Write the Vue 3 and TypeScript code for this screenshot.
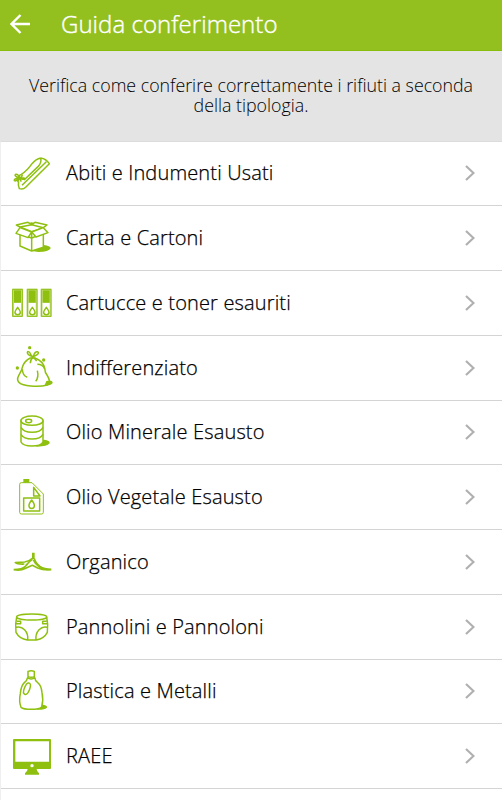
<script setup lang="ts">
interface Category {
  id: string
  label: string
  viewBox: string
}

const categories: Category[] = [
  { id: 'clothes', label: 'Abiti e Indumenti Usati', viewBox: '0 -12 192 192' },
  { id: 'paper', label: 'Carta e Cartoni', viewBox: '0 -12 192 192' },
  { id: 'toner', label: 'Cartucce e toner esauriti', viewBox: '0 -12 192 192' },
  { id: 'unsorted', label: 'Indifferenziato', viewBox: '0 -8 192 192' },
  { id: 'mineral', label: 'Olio Minerale Esausto', viewBox: '0 -8 192 192' },
  { id: 'vegetable', label: 'Olio Vegetale Esausto', viewBox: '0 -9 192 192' },
  { id: 'organic', label: 'Organico', viewBox: '0 -11 192 192' },
  { id: 'diapers', label: 'Pannolini e Pannoloni', viewBox: '0 -11 192 192' },
  { id: 'plastic', label: 'Plastica e Metalli', viewBox: '0 -8 192 192' },
  { id: 'raee', label: 'RAEE', viewBox: '0 -9 192 192' },
]
</script>

<template>
  <main class="screen">
    <header class="bar">
      <svg class="back" viewBox="0 0 20 20"><path d="M20 10H1.5M10.5 1 1.5 10l9 9" /></svg>
      <h1 class="title">Guida conferimento</h1>
    </header>
    <p class="intro">Verifica come conferire correttamente i rifiuti a seconda<br />della tipologia.</p>
    <ul class="list">
      <li v-for="c in categories" :key="c.id" class="row">
        <svg class="icon" :viewBox="c.viewBox">
          <g v-if="c.id === 'clothes'">
            <path d="M122 39Q138 41 148 56L77 127Q69 135 58 131Q53 121 56 109M122 39Q108 42 96 56Q82 77 64 88M122 39Q126 52 114 65L72 105M139 50 66 121" />
            <path d="M57 99Q41 92 47 88Q56 87 57 99Q58 86 66 90Q69 94 57 99Q76 97 74 102Q68 105 57 99Q41 101 43 107Q49 110 57 99L53 112M58 100 64 110" />
          </g>
          <g v-else-if="c.id === 'paper'">
            <path class="solid" d="M96 123 131 105Q151 107 152 115Q147 126 115 126Z" />
            <path class="paper" d="M60 73 95 84 130 70V112L95 123 60 108Z" />
            <path d="M60 51 95 39 130 53 95 65ZM60 51V71M130 53V70M95 65V123" />
            <path class="paper" d="M60 51 49 45 84 37 95 44ZM130 53 141 45 105 37 95 44ZM60 53 95 66 84 83 48 70ZM130 53 95 66 108 81 144 68Z" />
          </g>
          <g v-else-if="c.id === 'toner'">
            <g v-for="x in [36, 80, 122]" :key="x" :transform="`translate(${x} 41)`">
              <path class="pale" d="M0 0H33V85H0Z" />
              <path class="solid" d="M6 5H27V42H6Z" />
              <path class="paper blank" d="M6 43H27V80H6Z" />
              <path class="thin" d="M2 2H31V83H2Z" />
              <path d="M17 56Q8 68 9 72C10 80 24 80 25 72Q26 68 17 56Z" />
            </g>
          </g>
          <g v-else-if="c.id === 'unsorted'">
            <path d="M91 58Q73 67 68 83Q66 94 56 111C47 128 57 139 92 142Q121 145 142 139C154 134 147 119 141 109Q135 102 134 89Q130 68 105 58Z" />
            <path d="M96 56C88 32 79 38 83 45Q86 51 100 54C121 46 117 37 108 40Q102 43 99 57M99 56Q91 62 91 74M102 57 110 67M112 77Q128 77 134 91M112 96Q117 116 107 128M67 92Q68 112 82 116" />
            <path class="solid" d="M139 127Q157 123 158 133Q153 142 134 140Z" />
            <circle class="solid" cx="89" cy="27" r="5" />
            <circle class="solid" cx="131" cy="64" r="5" />
            <circle class="solid" cx="52" cy="88" r="5" />
          </g>
          <g v-else-if="c.id === 'mineral'">
            <path class="solid" d="M99 128 132 111Q151 113 149 122Q141 132 112 132Z" />
            <path class="paper" d="M63 53V118Q69 130 96 130Q123 130 129 118V53Z" />
            <ellipse class="paper" cx="96" cy="54" rx="33" ry="14" />
            <ellipse cx="86" cy="55" rx="9" ry="5" />
            <path d="M63 74Q71 89 96 89Q122 89 129 74M63 95Q71 109 96 109Q122 109 129 95" />
          </g>
          <g v-else-if="c.id === 'vegetable'">
            <path class="solid" d="M70 33H88V44H70Z" />
            <path class="thin" d="M64 44H96L130 78V133Q130 138 125 138H64Q59 138 59 133V49Q59 44 64 44Z" />
            <path d="M101 58V84H120Z" />
            <path d="M71 90H119V129H71Z" />
            <path d="M95 96Q86 108 87 114C88 124 102 124 103 114Q104 108 95 96Z" />
          </g>
          <g v-else-if="c.id === 'organic'">
            <path class="solid" d="M96 57H104V76L96 78Z" />
            <path class="leaf" d="M98 73Q88 83 74 85L46 87Q53 92 73 91M96 78Q81 90 77 97Q67 107 41 108M41 108Q61 112 77 104L97 95L113 103Q130 110 154 108M103 74Q106 88 120 98Q132 106 154 107M100 79Q106 92 116 98Q126 105 139 107M86 86Q77 101 60 107" />
          </g>
          <g v-else-if="c.id === 'diapers'">
            <ellipse cx="95" cy="55" rx="45" ry="9" />
            <path d="M50 55Q45 77 48 101Q58 120 82 124H109Q133 119 142 101Q145 77 140 55M48 86C67 80 86 99 83 124M142 86C124 80 105 99 108 124M51 68H62V75H49M139 68H128V75H141" />
          </g>
          <g v-else-if="c.id === 'plastic'">
            <path class="solid" d="M109 141 126 129Q143 130 141 138Q132 145 112 144Z" />
            <path class="paper" d="M82 50Q81 57 73 63Q63 72 61 96Q56 119 63 137Q70 143 94 143Q118 143 125 136Q131 115 126 93Q124 71 113 63Q105 58 105 50Z" />
            <path class="paper" d="M84 29Q94 25 103 29V45Q94 49 84 45ZM81 48Q93 56 106 48" />
            <ellipse cx="81" cy="81" rx="8" ry="18" transform="rotate(22 81 81)" />
          </g>
          <g v-else>
            <path class="solid" fill-rule="evenodd" d="M42 36H150Q153 36 153 39V123Q153 126 150 126H110Q110 133 117 139V143H75V139Q82 134 83 126H42Q39 126 39 123V39Q39 36 42 36ZM46 43V104H147V43ZM101 116A5 5 0 1 0 91 116A5 5 0 1 0 101 116Z" />
          </g>
        </svg>
        <span class="label">{{ c.label }}</span>
        <svg class="chevron" viewBox="0 0 10 16"><path d="M1 1 8.5 8 1 15" /></svg>
      </li>
    </ul>
  </main>
</template>

<style>
body {
  margin: 0;
  background: #fff;
}
</style>

<style scoped>
.screen {
  box-sizing: border-box;
  height: 800px;
  overflow: hidden;
  background: #fff;
  color: #000;
  font-family: 'Open Sans', 'Noto Sans', sans-serif;
}
.bar {
  box-sizing: border-box;
  display: flex;
  align-items: center;
  height: 51px;
  padding: 0 10px 2px;
  border-bottom: 1px solid #88bd0e;
  background: #93c01f;
}
.back {
  width: 20px;
  height: 20px;
  fill: none;
  stroke: #fff;
  stroke-width: 2.4;
}
.title {
  margin: 0 0 0 31px;
  color: #fff;
  font-size: 24px;
  font-weight: 300;
  letter-spacing: 0.05px;
  line-height: 32px;
  white-space: nowrap;
  -webkit-text-stroke: 0.4px #fff;
}
.intro {
  box-sizing: border-box;
  height: 89.5px;
  margin: 0;
  padding-top: 24px;
  background: #e4e4e4;
  font-size: 17.8px;
  font-weight: 300;
  line-height: 20px;
  text-align: center;
  white-space: nowrap;
}
.list {
  height: 660px;
  margin: 0;
  padding: 0;
  border-top: 1px solid #dcdcdc;
  border-left: 1px solid #efefef;
  list-style: none;
}
.row {
  box-sizing: border-box;
  display: flex;
  align-items: center;
  height: 64.75px;
  padding-right: 27px;
  border-bottom: 1px solid #d4d4d4;
}
.icon {
  flex: none;
  width: 64px;
  height: 64px;
  margin-left: -1px;
  fill: none;
  stroke: #8fc010;
  stroke-width: 4.5;
  stroke-linejoin: round;
}
.solid {
  fill: #8fc010;
  stroke: none;
}
.paper {
  fill: #fff;
}
.blank {
  stroke: none;
}
.pale {
  fill: #c9df8c;
  stroke: none;
}
.thin {
  stroke-width: 3;
}
.leaf {
  stroke-width: 5;
}
.label {
  flex: 1;
  padding: 0 0 0 2px;
  font-size: 20px;
  font-weight: 300;
  letter-spacing: 0.15px;
  line-height: 28px;
  white-space: nowrap;
  -webkit-text-stroke: 0.25px #000;
}
.chevron {
  width: 10px;
  height: 16px;
  fill: none;
  stroke: #b0b0b0;
  stroke-width: 2.2;
}
</style>
